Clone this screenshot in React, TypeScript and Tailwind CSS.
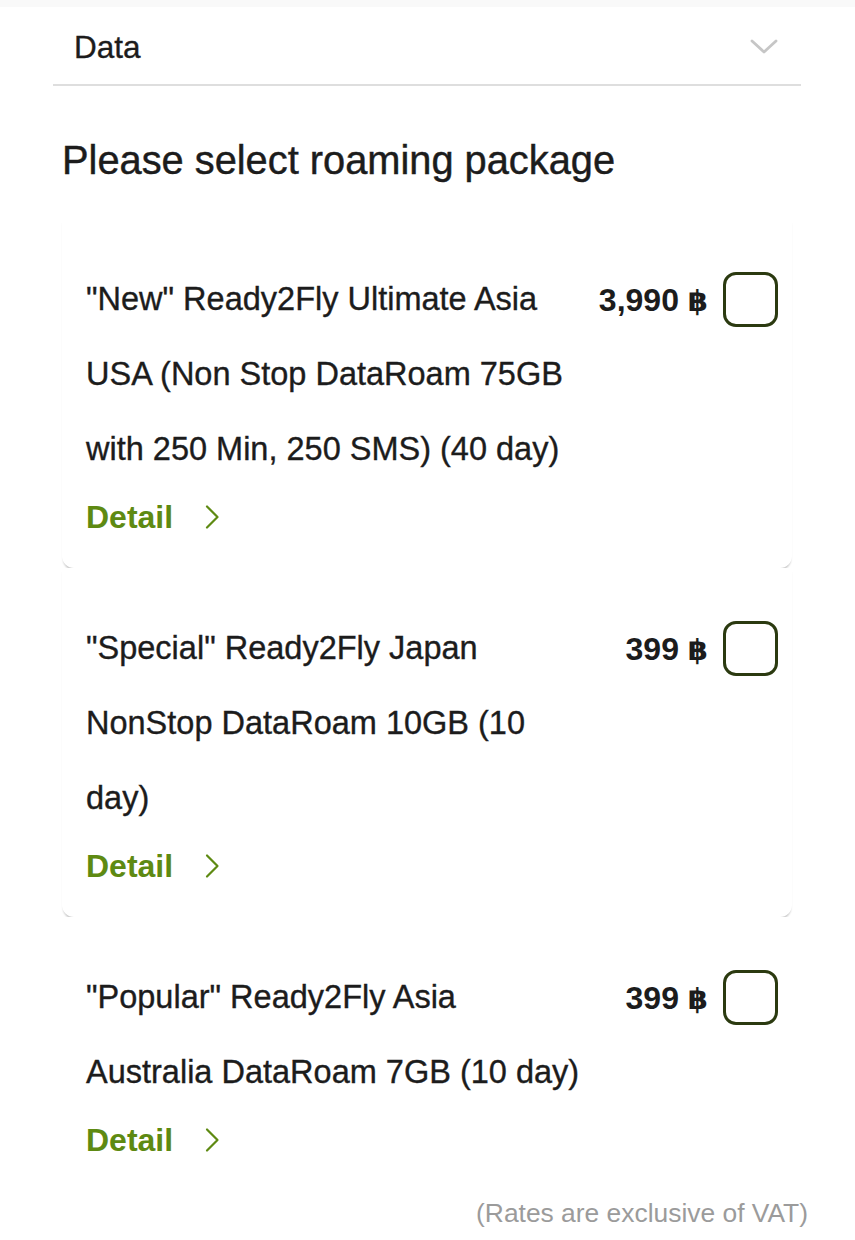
import React, { useState } from "react";

const packages = [
  { id: 1, title: "\"New\" Ready2Fly Ultimate Asia USA (Non Stop DataRoam 75GB with 250 Min, 250 SMS) (40 day)", price: "3,990" },
  { id: 2, title: "\"Special\" Ready2Fly Japan NonStop DataRoam 10GB (10 day)", price: "399" },
  { id: 3, title: "\"Popular\" Ready2Fly Asia Australia DataRoam 7GB (10 day)", price: "399" },
];

const PackageCard = ({ pkg, last }: { pkg: (typeof packages)[number]; last: boolean }) => {
  const [checked, setChecked] = useState(false);
  return (
    <div
      className={
        "ml-[62px] w-[730px] rounded-b-xl bg-white pt-[43px] pb-[31px] pl-[24px] pr-[14px] " +
        (last ? "" : "shadow-[0_3px_2px_-1px_rgba(0,0,0,0.22)]")
      }
    >
      <div className="flex items-start">
        <p className="w-[498px] text-[32.5px] leading-[75px] text-[#1c1c1c] [-webkit-text-stroke:0.35px_#1c1c1c]">{pkg.title}</p>
        <div className="flex h-[75px] flex-1 items-center justify-end gap-[15px]">
          <span className="text-[32px] font-bold text-[#1c1c1c]">
            {pkg.price} <span className="font-['DejaVu_Sans',sans-serif] text-[29px]">฿</span>
          </span>
          <button
            onClick={() => setChecked(!checked)}
            className="h-[55px] w-[55px] rounded-[13px] border-[3px] border-[#2b3a10] bg-white"
          />
        </div>
      </div>
      <div className="mt-[10px] flex items-center">
        <span className="text-[32px] font-bold leading-[40px] text-[#5e8a12]">Detail</span>
        <svg className="ml-[31px]" width="17" height="26" viewBox="0 0 17 26" fill="none">
          <path d="M3 2.5 L13.5 13 L3 23.5" stroke="#5e8a12" strokeWidth="2.2" strokeLinecap="round" strokeLinejoin="round" />
        </svg>
      </div>
    </div>
  );
};

const App = () => {
  return (
    <div className="min-h-[1240px] bg-white font-['Liberation_Sans',Arial,sans-serif]">
      <div className="h-[7px] bg-[#f9f9f9]" />
      <div className="ml-[53px] flex h-[79px] w-[748px] items-center justify-between border-b-2 border-[#dedede] pt-[5px] pl-[21px] pr-[22px]">
        <span className="text-[31.5px] text-[#1c1c1c] [-webkit-text-stroke:0.35px_#1c1c1c]">Data</span>
        <svg width="30" height="17" viewBox="0 0 30 17" fill="none" className="-mt-[4px]">
          <path d="M3 3 L15 14 L27 3" stroke="#c6c6c6" strokeWidth="2.8" strokeLinecap="round" strokeLinejoin="round" />
        </svg>
      </div>
      <h1 className="mt-[52px] ml-[62px] text-[39.8px] leading-[44px] text-[#1c1c1c] [-webkit-text-stroke:0.45px_#1c1c1c]">
        Please select roaming package
      </h1>
      <div className="mt-[37px]">
        {packages.map((p, i) => (
          <PackageCard key={p.id} pkg={p} last={i === packages.length - 1} />
        ))}
      </div>
      <p className="mt-[3px] pr-[47px] text-right text-[26.4px] text-[#9b9b9b]">(Rates are exclusive of VAT)</p>
    </div>
  );
};

export default App;
